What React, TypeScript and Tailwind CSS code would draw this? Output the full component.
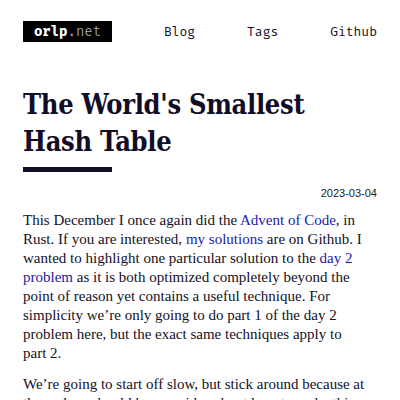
export default function App() {
  const mono = "font-['Fira_Mono','DejaVu_Sans_Mono',monospace]";
  const link = "text-[#1a1aa8]";
  return (
    <div className="min-h-[400px] bg-white px-[23px] pt-[21px] text-[#13101f]">
      <nav className={`flex items-center justify-between text-[13px] ${mono}`}>
        <a className="flex h-[21px] w-[89px] items-center justify-center bg-black text-[14px] text-white">
          <span className="font-bold">orlp</span>
          <span className="text-[#9a9a9a]">.net</span>
        </a>
        <a>Blog</a>
        <a>Tags</a>
        <a>Github</a>
      </nav>

      <h1 className="mt-[44px] font-['DejaVu_Serif_Condensed','DejaVu_Serif',serif] text-[27px] font-bold leading-[37px] tracking-[-0.3px] text-[#120d26]">
        The World's Smallest Hash Table
      </h1>
      <div className="mt-[7px] h-[5px] w-[89px] bg-[#120d26]" />

      <p className="mt-[13px] text-right font-['Liberation_Sans',sans-serif] text-[11px] text-[#222]">
        2023-03-04
      </p>

      <div className="mt-[9px] space-y-[12px] pr-[12px] font-['Liberation_Serif',serif] text-[15px] leading-[19px]">
        <p>
          This December I once again did the <a className={link}>Advent of Code</a>, in
          Rust. If you are interested, <a className={link}>my solutions</a> are on Github. I
          wanted to highlight one particular solution to the{" "}
          <a className={link}>day 2 problem</a> as it is both optimized completely beyond the
          point of reason yet contains a useful technique. For simplicity we’re only going to
          do part 1 of the day 2 problem here, but the exact same techniques apply to part 2.
        </p>
        <p>
          We’re going to start off slow, but stick around because at the end we should have
          an idea about how to make this.
        </p>
      </div>
    </div>
  );
}
